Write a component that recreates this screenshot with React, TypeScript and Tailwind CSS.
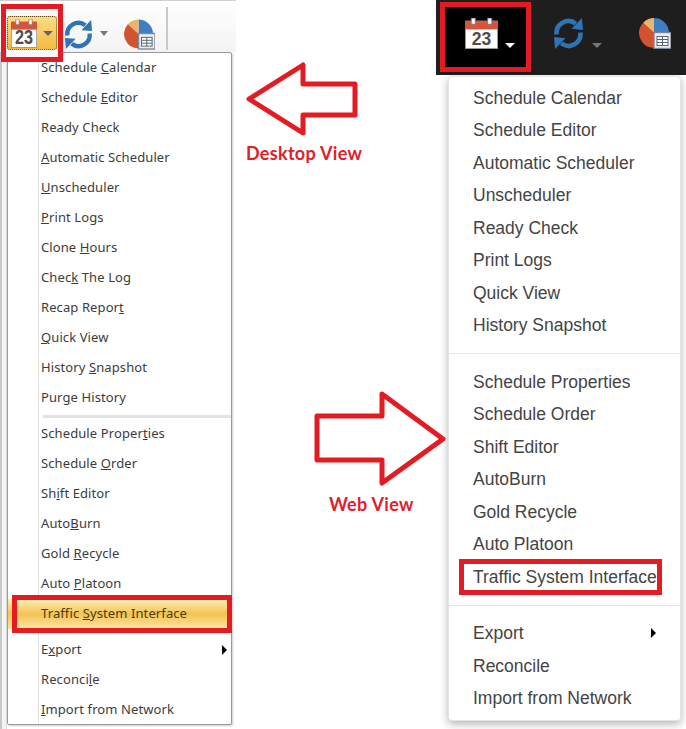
import React from "react";

type Item = { label: string; u?: number; arrow?: boolean };

const desktopA: Item[] = [
  { label: "Schedule Calendar", u: 9 },
  { label: "Schedule Editor", u: 9 },
  { label: "Ready Check" },
  { label: "Automatic Scheduler", u: 0 },
  { label: "Unscheduler", u: 0 },
  { label: "Print Logs", u: 0 },
  { label: "Clone Hours", u: 6 },
  { label: "Check The Log", u: 4 },
  { label: "Recap Report", u: 11 },
  { label: "Quick View", u: 0 },
  { label: "History Snapshot", u: 8 },
  { label: "Purge History", u: 3 },
];
const desktopB: Item[] = [
  { label: "Schedule Properties", u: 15 },
  { label: "Schedule Order", u: 9 },
  { label: "Shift Editor", u: 2 },
  { label: "AutoBurn", u: 4 },
  { label: "Gold Recycle", u: 5 },
  { label: "Auto Platoon", u: 5 },
];
const desktopC: Item[] = [
  { label: "Export", u: 1, arrow: true },
  { label: "Reconcile", u: 7 },
  { label: "Import from Network", u: 0 },
];

const webA = ["Schedule Calendar", "Schedule Editor", "Automatic Scheduler", "Unscheduler", "Ready Check", "Print Logs", "Quick View", "History Snapshot"];
const webB = ["Schedule Properties", "Schedule Order", "Shift Editor", "AutoBurn", "Gold Recycle", "Auto Platoon"];

function Label({ item }: { item: Item }) {
  const { label, u } = item;
  if (u === undefined) return <span>{label}</span>;
  return (
    <span>
      {label.slice(0, u)}
      <u>{label[u]}</u>
      {label.slice(u + 1)}
    </span>
  );
}

function DesktopRow({ item }: { item: Item }) {
  return (
    <div className="h-[30px] flex items-center pl-[33px] pr-[4px] justify-between">
      <Label item={item} />
      {item.arrow && <div className="w-0 h-0 border-y-[5px] border-y-transparent border-l-[5px] border-l-black" />}
    </div>
  );
}

function Refresh({ className }: { className: string }) {
  return (
    <svg viewBox="0 0 32 32" className={className} fill="none">
      <path d="M4.5 17A11.5 11.5 0 0 1 23 6.5" stroke="#2f75b5" strokeWidth="4.5" />
      <path d="M27.5 15A11.5 11.5 0 0 1 9 25.5" stroke="#2f75b5" strokeWidth="4.5" />
      <path d="M19 11.5L30 12.5L29 1Z" fill="#2f75b5" />
      <path d="M13 20.5L2 19.5L3 31Z" fill="#2f75b5" />
    </svg>
  );
}

function Pie({ className }: { className: string }) {
  return (
    <svg viewBox="0 0 32 32" className={className}>
      <path d="M15 16V1A15 15 0 0 1 30 16Z" fill="#3f7fc1" />
      <path d="M15 16V1A15 15 0 0 0 4 6Z" fill="#eab56a" />
      <path d="M15 16L4 6A15 15 0 0 0 15 31Z" fill="#d2532f" />
      <path d="M15 16H30A15 15 0 0 1 15 31Z" fill="#3f7fc1" />
      <rect x="15" y="15.5" width="17" height="16" fill="#e9eef3" stroke="#7b8794" strokeWidth="1.4" />
      <rect x="18" y="19.5" width="11" height="9" fill="#fff" stroke="#5b6570" strokeWidth="1" />
      <path d="M23.5 19.5V28.5M18 22.5H29M18 25.5H29" stroke="#5b6570" strokeWidth="1" />
    </svg>
  );
}

function Calendar({ className, size, stretch }: { className: string; size: number; stretch?: boolean }) {
  return (
    <svg viewBox="0 0 32 30" className={className} preserveAspectRatio={stretch ? "none" : "xMidYMid meet"}>
      <rect x="0.5" y="3" width="31" height="26.5" fill="#fff" stroke="#9a9a9a" />
      <rect x="0" y="3" width="32" height="8" fill="#d9533a" />
      <rect x="6" y="0" width="4" height="6" fill="#f4f4f4" stroke="#777" strokeWidth="0.8" />
      <rect x="22" y="0" width="4" height="6" fill="#f4f4f4" stroke="#777" strokeWidth="0.8" />
      <text x="16" y="26" textAnchor="middle" fontSize={size} fontWeight="700" fill="#4d4d4d" fontFamily="'Liberation Sans', sans-serif">23</text>
    </svg>
  );
}

export default function App() {
  return (
    <div className="relative w-[686px] h-[729px] bg-white overflow-hidden flex">
      {/* Desktop view */}
      <div className="w-[236px] shrink-0 flex flex-col font-['Noto_Sans',sans-serif] text-[13px] tracking-[0.1px] text-[#3c3c3c]">
        <div className="h-[52px] shrink-0 bg-gradient-to-b from-white to-[#f3f3f3] border-t border-[#d0d0d0] flex items-start">
          <div className="relative ml-[1px] mt-[3px] w-[62px] h-[58px] border-[5px] border-[#e31b23] z-10 flex items-start justify-center pt-[7px] bg-[#f8f8f8]">
            <div className="w-[50px] h-[34px] shrink-0 rounded-[3px] bg-gradient-to-b from-[#fbdc85] to-[#f3b93c] border border-dotted border-[#5d4a12] flex items-center pl-[3px]">
              <Calendar className="w-[26px] h-[29px]" size={20} stretch />
              <div className="ml-[6px] w-0 h-0 border-x-[5px] border-x-transparent border-t-[5px] border-t-[#666]" />
            </div>
          </div>
          <Refresh className="w-[31px] h-[33px] mt-[17px] ml-[0px]" />
          <div className="mt-[30px] ml-[6px] w-0 h-0 border-x-[4px] border-x-transparent border-t-[5px] border-t-[#777]" />
          <Pie className="w-[31px] h-[32px] mt-[17px] ml-[16px]" />
          <div className="mt-[6px] ml-[11px] w-[2px] h-[43px] bg-[#c9c9c9]" />
        </div>
        <div className="flex-1 flex bg-white">
          <div className="w-[7px] bg-[#f4f4f4] border-l-[2px] border-l-[#c8c8c8] border-r border-r-[#dcdcdc]" />
          <div className="w-[225px] h-[673px] bg-white border border-[#9a9a9a] rounded-[2px] shadow-[1px_1px_2px_rgba(0,0,0,0.2)] relative">
            <div className="absolute left-[30px] top-0 bottom-0 w-[1px] bg-[#e2e2e2]" />
            {desktopA.map((i) => <DesktopRow key={i.label} item={i} />)}
            <div className="h-[6px] flex items-center pl-[35px]"><div className="w-full h-[3px] bg-[#e3e3e3]" /></div>
            {desktopB.map((i) => <DesktopRow key={i.label} item={i} />)}
            <div className="relative h-[30px] flex items-center pl-[33px] bg-gradient-to-b from-[#fdeeb5] via-[#f3c350] to-[#fbe6a2] text-[#4a4016]">
              <Label item={{ label: "Traffic System Interface", u: 8 }} />
              <div className="absolute left-[4px] -right-[1px] -top-[4px] -bottom-[4px] border-[5px] border-[#e31b23]" />
            </div>
            <div className="h-[6px]" />
            {desktopC.map((i) => <DesktopRow key={i.label} item={i} />)}
          </div>
        </div>
      </div>

      {/* Annotations */}
      <div className="w-[200px] shrink-0 flex flex-col font-['Lato',sans-serif] font-bold text-[#e0202a] text-[18px] tracking-[0.3px] relative z-20">
        <svg viewBox="0 0 116 78" className="w-[116px] h-[78px] mt-[60px] ml-[9px] shrink-0" fill="#fff" stroke="#e31b23" strokeWidth="5" strokeLinejoin="round">
          <path d="M4 39L58 5V24H110V55H58V73Z" />
        </svg>
        <div className="mt-[3px] ml-[10px] h-[24px] leading-[24px]">Desktop View</div>
        <svg viewBox="0 0 132 96" className="w-[132px] h-[96px] mt-[226px] ml-[78px] shrink-0 overflow-visible" fill="#fff" stroke="#e31b23" strokeWidth="5" strokeLinejoin="round">
          <path d="M3 25H68V3L129 48L68 92V69H3Z" />
        </svg>
        <div className="mt-[5px] ml-[93px] h-[24px] leading-[24px]">Web View</div>
      </div>

      {/* Web view */}
      <div className="w-[250px] shrink-0 flex flex-col font-['Liberation_Sans',sans-serif] text-[17.5px] text-[#444]">
        <div className="h-[75px] shrink-0 bg-[#1e1e1e] flex items-start">
          <div className="ml-[4px] mt-[2px] w-[91px] h-[70px] bg-black border-[5px] border-[#e31b23] flex items-start pl-[20px] pt-[11px]">
            <Calendar className="w-[33px] h-[31px]" size={17} />
            <div className="ml-[7px] mt-[25px] w-0 h-0 border-x-[5px] border-x-transparent border-t-[5px] border-t-white" />
          </div>
          <Refresh className="w-[33px] h-[33px] ml-[21px] mt-[17px]" />
          <div className="ml-[7px] mt-[43px] w-0 h-0 border-x-[5px] border-x-transparent border-t-[5px] border-t-[#777]" />
          <Pie className="w-[32px] h-[32px] ml-[37px] mt-[17px]" />
        </div>
        <div className="ml-[12px] w-[233px] mt-[1px] h-[645px] bg-white rounded-[4px] border border-[#e4e4e4] shadow-[0_3px_8px_rgba(0,0,0,0.3)] pt-[4.7px]">
          {webA.map((t) => <div key={t} className="h-[32.5px] leading-[32.5px] pl-[24px]">{t}</div>)}
          <div className="h-[24px] flex items-center"><div className="w-full h-[1px] bg-[#e5e5e5]" /></div>
          {webB.map((t) => <div key={t} className="h-[32.5px] leading-[32.5px] pl-[24px]">{t}</div>)}
          <div className="relative h-[32.5px] leading-[32.5px] pl-[24px] whitespace-nowrap">
            Traffic System Interface
            <div className="absolute left-[10px] top-[-2px] w-[203px] h-[36px] border-[5px] border-[#e31b23]" />
          </div>
          <div className="h-[24px] flex items-center"><div className="w-full h-[1px] bg-[#e5e5e5]" /></div>
          <div className="h-[32.5px] flex items-center pl-[24px] pr-[24px] justify-between">
            Export
            <div className="w-0 h-0 border-y-[5px] border-y-transparent border-l-[5px] border-l-black" />
          </div>
          <div className="h-[32.5px] leading-[32.5px] pl-[24px]">Reconcile</div>
          <div className="h-[32.5px] leading-[32.5px] pl-[24px]">Import from Network</div>
        </div>
      </div>
    </div>
  );
}
